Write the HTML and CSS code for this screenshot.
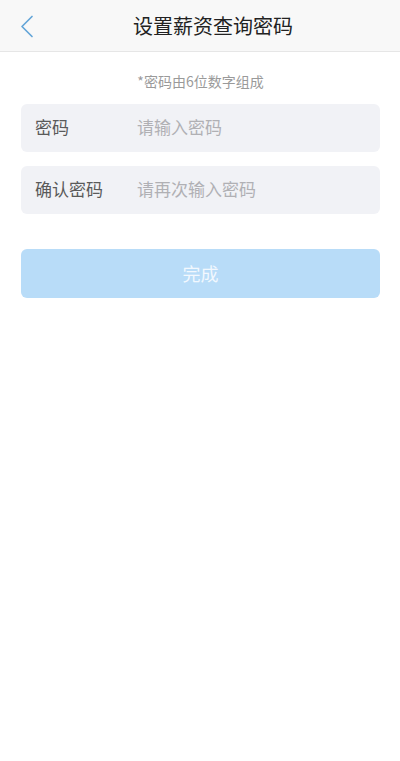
FILE: index.html
```html
<!DOCTYPE html>
<html lang="zh">
<head>
<meta charset="utf-8">
<link rel="stylesheet" href="styles.css">
</head>
<body>
<div class="page">
  <header class="nav">
    <span class="back">
      <svg width="16" height="23" viewBox="0 0 16 23"><path d="M13 1.5 L3 11.5 L13 21.5" fill="none" stroke="#64a6d8" stroke-width="1.7" stroke-linecap="round" stroke-linejoin="round"/></svg>
    </span>
    <h1 class="title">设置薪资查询密码</h1>
  </header>
  <main class="content">
    <p class="hint">*密码由6位数字组成</p>
    <div class="field">
      <span class="label">密码</span>
      <span class="placeholder">请输入密码</span>
    </div>
    <div class="field">
      <span class="label">确认密码</span>
      <span class="placeholder">请再次输入密码</span>
    </div>
    <button class="submit">完成</button>
  </main>
</div>
</body>
</html>
```
FILE: styles.css
```css
* { box-sizing: border-box; }
html, body { margin: 0; padding: 0; background: #fff; }
body { font-family: "Noto Sans CJK SC", "Noto Sans", sans-serif; }
.page { width: 400px; min-height: 761px; background: #fff; }
.nav {
  height: 52px;
  background: #f8f8f8;
  border-bottom: 1px solid #e6e6e6;
  display: flex;
  align-items: center;
  justify-content: center;
  position: relative;
}
.back { position: absolute; left: 19px; top: 15px; display: flex; }
.title { margin: 0 0 0 26px; font-size: 20px; font-weight: 400; color: #222; line-height: 1; }
.content { padding: 0 20px 0 21px; display: flex; flex-direction: column; }
.hint { margin: 19px 0 0; text-align: center; font-size: 14px; color: #9a9a9a; line-height: 20px; }
.field {
  margin-top: 13px;
  height: 48px;
  background: #f1f2f6;
  border-radius: 6px;
  display: flex;
  align-items: center;
  padding: 0 0 3px 14px;
}
.field + .field { margin-top: 14px; }
.label { width: 102px; font-size: 17px; color: #5a5a5a; }
.placeholder { font-size: 17px; color: #b0b0b4; }
.submit {
  margin-top: 35px;
  height: 49px;
  border: 0;
  border-radius: 6px;
  background: #b8dcf8;
  color: #f2f8fe;
  font-family: inherit;
  font-size: 18px;
  padding: 0 0 2px;
}
```
